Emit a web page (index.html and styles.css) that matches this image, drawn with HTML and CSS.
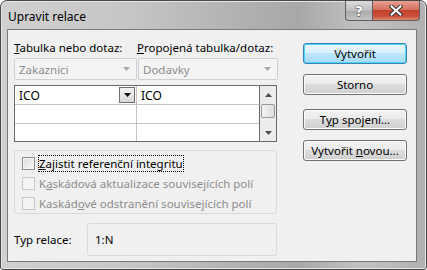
FILE: index.html
```html
<!DOCTYPE html>
<html lang="cs">
<head>
<meta charset="utf-8">
<title>Upravit relace</title>
<link rel="stylesheet" href="styles.css">
</head>
<body>
<div class="window">
  <div class="titlebar">
    <div class="title">Upravit relace</div>
    <div class="caption">
      <div class="cbtn help"><span>?</span></div>
      <div class="cbtn close"><svg width="14" height="11" viewBox="0 0 14 11"><path d="M2.5 1.5 L11.5 9.5 M11.5 1.5 L2.5 9.5" stroke="#3a3a3a" stroke-width="4" stroke-linecap="square"/><path d="M2.5 1.5 L11.5 9.5 M11.5 1.5 L2.5 9.5" stroke="#ffffff" stroke-width="2" stroke-linecap="square"/></svg></div>
    </div>
  </div>
  <div class="client">
    <div class="main">
      <div class="left">
        <div class="labels">
          <div class="lbl"><u>T</u>abulka nebo dotaz:</div>
          <div class="lbl"><u>P</u>ropojená tabulka/dotaz:</div>
        </div>
        <div class="combos">
          <div class="combo c1"><span>Zakaznici</span><svg class="carr" width="7" height="4" viewBox="0 0 7 4"><path d="M0 0H7L3.5 4Z" fill="#a8a8a8"/></svg></div>
          <div class="combo c2"><span>Dodavky</span><svg class="carr" width="7" height="4" viewBox="0 0 7 4"><path d="M0 0H7L3.5 4Z" fill="#a8a8a8"/></svg></div>
        </div>
        <div class="grid">
          <div class="cells">
            <div class="cell a first"><span>ICO</span><div class="dd"><svg width="7" height="4" viewBox="0 0 7 4"><path d="M0 0H7L3.5 4Z" fill="#000"/></svg></div></div>
            <div class="cell b first"><span>ICO</span></div>
            <div class="cell a"></div>
            <div class="cell b"></div>
            <div class="cell a last"></div>
            <div class="cell b last"></div>
          </div>
          <div class="vscroll">
            <div class="sarrow"><svg width="7" height="4" viewBox="0 0 7 4"><path d="M3.5 0L7 4H0Z" fill="#4d4d4d"/></svg></div>
            <div class="thumb"></div>
            <div class="strack"></div>
            <div class="sarrow"><svg width="7" height="4" viewBox="0 0 7 4"><path d="M0 0H7L3.5 4Z" fill="#4d4d4d"/></svg></div>
          </div>
        </div>
        <div class="group">
          <div class="chk"><span class="box"></span><span class="focus"><u>Z</u>ajistit referenční integritu</span></div>
          <div class="chk dis"><span class="box"></span><span>K<u>a</u>skádová aktualizace souvisejících polí</span></div>
          <div class="chk dis"><span class="box"></span><span>Kaskád<u>o</u>vé odstranění souvisejících polí</span></div>
        </div>
        <div class="typrow">
          <div class="typlbl">Typ relace:</div>
          <div class="typbox">1:N</div>
        </div>
      </div>
      <div class="right">
        <div class="btn default"><span>Vytvořit</span></div>
        <div class="btn"><span>Storno</span></div>
        <div class="btn gap"><span>T<u>y</u>p spojení...</span></div>
        <div class="btn"><span>Vytvořit <u>n</u>ovou...</span></div>
      </div>
    </div>
  </div>
</div>
</body>
</html>
```
FILE: styles.css
```css
* { box-sizing: border-box; }
html, body { margin: 0; padding: 0; background: #ffffff; }
body { font-family: "Noto Sans", "DejaVu Sans", sans-serif; font-size: 11.5px; color: #000; }
u { text-decoration: underline; text-underline-offset: 1px; }

.window {
  width: 427px; height: 270px;
  border: 1px solid #4a4a4a;
  border-radius: 7px 7px 3px 3px;
  background: linear-gradient(to right, #d0d0d0 0%, #c6c6c6 30%, #b2b2b2 55%, #a8a8a8 70%, #c2c2c2 85%, #b0b0b0 100%);
  box-shadow: inset 0 0 0 1px #e4e4e4;
  display: flex; flex-direction: column;
}
.titlebar {
  height: 28px; display: flex; justify-content: space-between; align-items: flex-start;
  padding-left: 7px;
}
.title { font-size: 12px; padding-top: 7px; color: #000; }
.caption { display: flex; margin-right: 6px; }
.cbtn {
  height: 20px; display: flex; align-items: center; justify-content: center;
  border: 1px solid #5e5e5e; border-top: none;
}
.help {
  width: 27px; border-radius: 0 0 0 4px; border-right: none;
  background: linear-gradient(#dcdcdc, #bdbdbd 50%, #a9a9a9 51%, #c4c4c4);
}
.help span {
  font-family: "DejaVu Sans", sans-serif; font-weight: bold; font-size: 14px; color: #fff;
  -webkit-text-stroke: 0.8px #444; paint-order: stroke fill; line-height: 1;
}
.close {
  width: 48px; border-radius: 0 0 4px 0;
  background: linear-gradient(#e8a193, #d3705f 45%, #c4432f 50%, #c74f3b 80%, #dd8a73);
}

.client {
  flex: 1; margin: 0 9px 7px 6px;
  background: #f0f0f0;
  border: 1px solid #7a7a7a;
}
.main { display: flex; padding: 10px 0 0 6px; }
.left { width: 264px; display: flex; flex-direction: column; }
.labels { display: flex; height: 16px; }
.labels .lbl:first-child { width: 123px; }
.lbl { white-space: nowrap; }
.combos { display: flex; margin-top: 2px; height: 22px; gap: 1px; }
.combo {
  border: 1px solid #d0d0d0; border-radius: 2px; background: #f4f4f4;
  display: flex; align-items: center; justify-content: space-between;
  padding: 0 6px 0 4px; color: #8d8d8d;
}
.c1 { width: 123px; }
.c2 { width: 140px; }

.grid {
  margin-top: 5px; width: 263px; height: 57px;
  border: 1px solid #6a6a6a; background: #fff; display: flex;
}
.cells { flex: 1; display: grid; grid-template-columns: 122px 1fr; grid-template-rows: 19px 19px 1fr; }
.cell { border-bottom: 1px solid #c4c4c4; position: relative; display: flex; align-items: center; padding-left: 4px; font-size: 12px; }
.cell.a { border-right: 1px solid #c4c4c4; }
.cell.last { border-bottom: none; }
.dd {
  position: absolute; right: 1px; top: 1px; width: 16px; height: 16px;
  border: 1px solid #707070;
  background: linear-gradient(#f2f2f2, #d8d8d8);
  display: flex; align-items: center; justify-content: center;
}
.vscroll { width: 17px; border-left: 1px solid #6a6a6a; background: #ececec; display: flex; flex-direction: column; }
.sarrow { height: 17px; display: flex; align-items: center; justify-content: center; }
.thumb {
  height: 14px; margin: 1px 1px; border: 1px solid #9a9a9a; border-radius: 2px;
  background: linear-gradient(to right, #f4f4f4, #dcdcdc);
}
.strack { flex: 1; }

.group {
  margin-top: 8px; width: 263px; height: 64px;
  border: 1px solid #dadada; border-radius: 3px;
  padding: 5px 0 0 7px; display: flex; flex-direction: column; gap: 5px;
}
.chk { display: flex; align-items: center; height: 15px; white-space: nowrap; }
.box {
  width: 13px; height: 13px; border: 1px solid #8e8f8f; margin-right: 4px;
  background: linear-gradient(135deg, #dcdcdc, #f8f8f8);
  box-shadow: inset 0 0 0 1px #f4f4f4;
}
.focus { outline: 1px dotted #000; outline-offset: 0; }
.dis { color: #8d8d8d; }
.dis .box { border-color: #c8c8c8; background: #f4f4f4; }

.typrow { display: flex; align-items: center; margin-top: 9px; }
.typlbl { width: 73px; }
.typbox {
  width: 190px; height: 33px; border: 1px solid #dadada; border-radius: 3px;
  display: flex; align-items: center; padding-left: 7px;
}

.right { margin-left: 25px; padding-top: 3px; display: flex; flex-direction: column; gap: 10px; }
.btn {
  width: 104px; height: 21px;
  border: 1px solid #707070; border-radius: 3px;
  background: linear-gradient(#f2f2f2 0%, #ebebeb 45%, #dddddd 50%, #cfcfcf 100%);
  box-shadow: inset 0 0 0 1px #fcfcfc;
  display: flex; align-items: center; justify-content: center; white-space: nowrap;
}
.btn.default {
  border-color: #3c7fb1;
  background: linear-gradient(#eaf6fd 0%, #d9f0fc 45%, #bee6fd 50%, #a7d9f5 100%);
  box-shadow: inset 0 0 0 1px #48d8fb;
}
.btn.gap { margin-top: 4px; }
```
